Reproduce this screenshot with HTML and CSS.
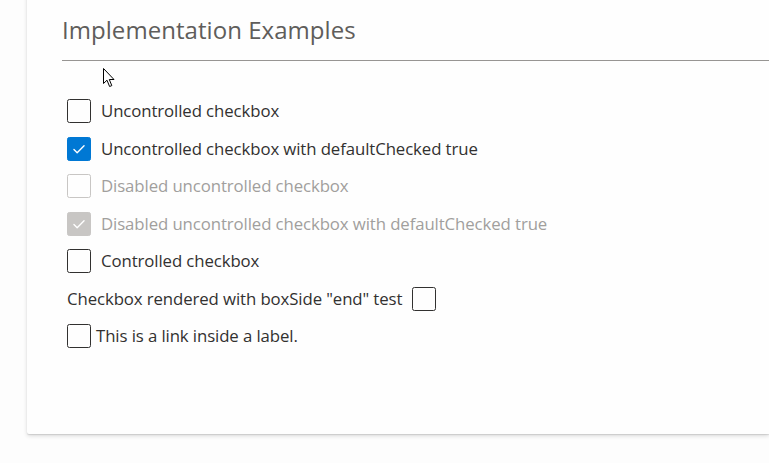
FILE: index.html
```html
<!DOCTYPE html>
<html lang="en">
<head>
<meta charset="utf-8">
<title>Implementation Examples</title>
<link rel="stylesheet" href="styles.css">
</head>
<body>
<div class="page">
  <section class="card">
    <h2 class="title">Implementation Examples</h2>
    <div class="rule"></div>
    <div class="list">
      <label class="cb">
        <span class="box"></span>
        <span class="text">Uncontrolled checkbox</span>
      </label>
      <label class="cb checked">
        <span class="box"><svg viewBox="0 0 24 24" class="mark"><polyline points="6.5,12.5 10,16 17.5,8.5"/></svg></span>
        <span class="text">Uncontrolled checkbox with defaultChecked true</span>
      </label>
      <label class="cb disabled">
        <span class="box"></span>
        <span class="text">Disabled uncontrolled checkbox</span>
      </label>
      <label class="cb disabled checked">
        <span class="box"><svg viewBox="0 0 24 24" class="mark"><polyline points="6.5,12.5 10,16 17.5,8.5"/></svg></span>
        <span class="text">Disabled uncontrolled checkbox with defaultChecked true</span>
      </label>
      <label class="cb">
        <span class="box"></span>
        <span class="text">Controlled checkbox</span>
      </label>
      <label class="cb end">
        <span class="text">Checkbox rendered with boxSide "end" test</span>
        <span class="box"></span>
      </label>
      <label class="cb custom">
        <span class="box"></span>
        <span class="text">This is a link inside a label.</span>
      </label>
    </div>
    <svg class="cursor" viewBox="0 0 13 20" width="13" height="20"><path d="M0.5 0.5 L0.5 15.5 L4 12.2 L6.6 18.5 L8.8 17.6 L6.3 11.5 L11 11.5 Z"/></svg>
  </section>
</div>
</body>
</html>
```
FILE: styles.css
```css
html, body {
  margin: 0;
  padding: 0;
  background: #fdfdfd;
}
body {
  font-family: "Open Sans", "Noto Sans", sans-serif;
  color: #323130;
  overflow: hidden;
  height: 463px;
}
.page {
  padding-left: 27px;
}
.card {
  position: relative;
  background: #fefefe;
  margin-top: -12px;
  height: 446px;
  padding: 0 0 0 35px;
  box-shadow: 0 1.9px 4.3px rgba(0,0,0,0.132), 0 0.4px 1.1px rgba(0,0,0,0.108);
  border-radius: 2px 0 0 2px;
}
.title {
  margin: 0;
  padding-top: 24px;
  font-size: 24px;
  line-height: 36px;
  font-weight: 400;
  color: #5f5d5b;
  letter-spacing: 0.05px;
}
.rule {
  margin-top: 12px;
  height: 1px;
  background: #979593;
}
.list {
  display: flex;
  flex-direction: column;
  gap: 13.5px;
  padding-top: 38px;
  padding-left: 5px;
}
.cb {
  display: flex;
  align-items: center;
  height: 24px;
  font-size: 16.8px;
  line-height: 24px;
  letter-spacing: -0.1px;
}
.box {
  box-sizing: border-box;
  width: 24px;
  height: 24px;
  border: 1.2px solid #323130;
  border-radius: 2.4px;
  flex: none;
  display: flex;
  align-items: center;
  justify-content: center;
}
.text {
  margin-left: 10px;
  white-space: nowrap;
}
.cb.end .text {
  margin-left: 0;
  margin-right: 10px;
}
.cb.custom .text {
  margin-left: 5px;
}
.mark {
  width: 24px;
  height: 24px;
  fill: none;
  stroke: #fff;
  stroke-width: 1.5;
  stroke-linecap: round;
  stroke-linejoin: round;
}
.cb.checked .box {
  background: #0078d4;
  border-color: #0078d4;
}
.cb.disabled .text {
  color: #a19f9d;
}
.cb.disabled .box {
  border-color: #c8c6c4;
}
.cb.disabled.checked .box {
  background: #c8c6c4;
  border-color: #c8c6c4;
}
.cursor {
  position: absolute;
  left: 76px;
  top: 80px;
  fill: #fff;
  stroke: #000;
  stroke-width: 1;
  stroke-linejoin: miter;
}
```
